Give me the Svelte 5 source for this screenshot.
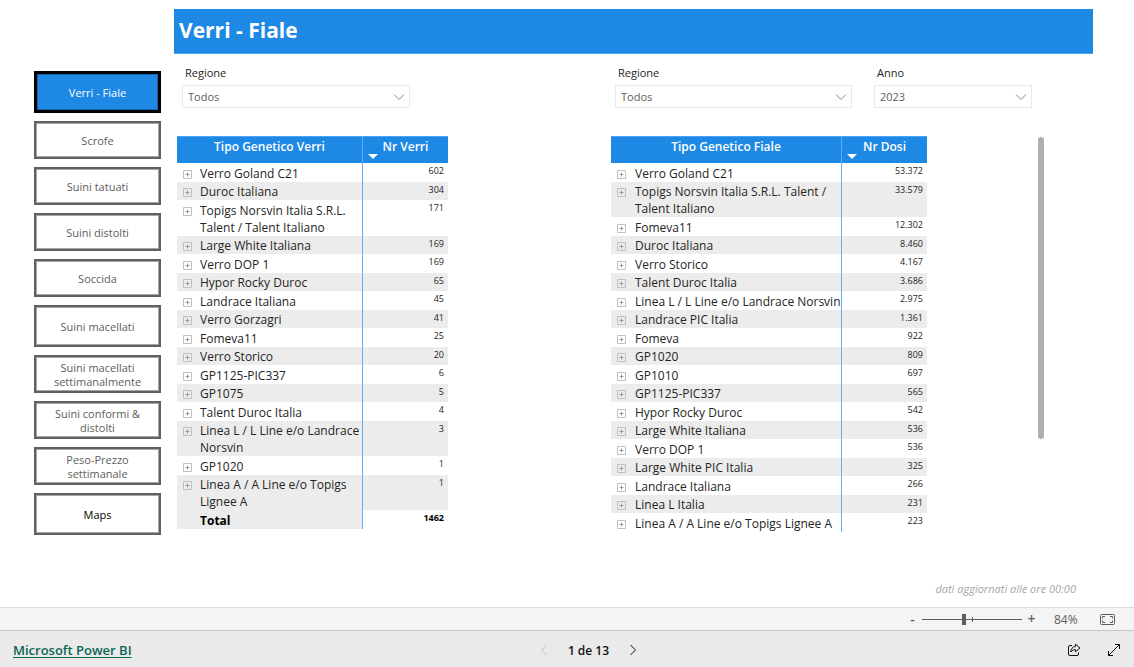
<script lang="ts">
  let page = $state('Verri - Fiale');
  let zoom = $state(42);

  const pages = [
    { name: 'Verri - Fiale', tall: true },
    { name: 'Scrofe' },
    { name: 'Suini tatuati' },
    { name: 'Suini distolti' },
    { name: 'Soccida' },
    { name: 'Suini macellati', tall: true },
    { name: 'Suini macellati settimanalmente' },
    { name: 'Suini conformi & distolti' },
    { name: 'Peso-Prezzo settimanale' },
    { name: 'Maps', tall: true, dark: true },
  ];

  const verri = [
    ['Verro Goland C21', '602'],
    ['Duroc Italiana', '304'],
    ['Topigs Norsvin Italia S.R.L. Talent / Talent Italiano', '171'],
    ['Large White Italiana', '169'],
    ['Verro DOP 1', '169'],
    ['Hypor Rocky Duroc', '65'],
    ['Landrace Italiana', '45'],
    ['Verro Gorzagri', '41'],
    ['Fomeva11', '25'],
    ['Verro Storico', '20'],
    ['GP1125-PIC337', '6'],
    ['GP1075', '5'],
    ['Talent Duroc Italia', '4'],
    ['Linea L / L Line e/o Landrace Norsvin', '3'],
    ['GP1020', '1'],
    ['Linea A / A Line e/o Topigs Lignee A', '1'],
  ];

  const fiale = [
    ['Verro Goland C21', '53.372'],
    ['Topigs Norsvin Italia S.R.L. Talent / Talent Italiano', '33.579'],
    ['Fomeva11', '12.302'],
    ['Duroc Italiana', '8.460'],
    ['Verro Storico', '4.167'],
    ['Talent Duroc Italia', '3.686'],
    ['Linea L / L Line e/o Landrace Norsvin', '2.975'],
    ['Landrace PIC Italia', '1.361'],
    ['Fomeva', '922'],
    ['GP1020', '809'],
    ['GP1010', '697'],
    ['GP1125-PIC337', '565'],
    ['Hypor Rocky Duroc', '542'],
    ['Large White Italiana', '536'],
    ['Verro DOP 1', '536'],
    ['Large White PIC Italia', '325'],
    ['Landrace Italiana', '266'],
    ['Linea L Italia', '231'],
    ['Linea A / A Line e/o Topigs Lignee A', '223'],
  ];
</script>

{#snippet slicer(id, label, value, cls)}
  <div class="slicer {cls}">
    <label for={id}>{label}</label>
    <div class="select">
      <select {id}><option>{value}</option></select>
      <svg width="12" height="8" viewBox="0 0 12 8"><path d="M1 1.5 6 6.5 11 1.5" /></svg>
    </div>
  </div>
{/snippet}

{#snippet matrix(title, measure, rows, cls, total)}
  <table class={cls}>
    <thead>
      <tr>
        <th class="name">{title}</th>
        <th class="num">{measure}<span class="sort"></span></th>
      </tr>
    </thead>
    <tbody>
      {#each rows as [name, n]}
        <tr>
          <td class="name">
            <div class="cell">
              <button class="expand" aria-label="Expand">
                <svg width="9" height="9" viewBox="0 0 9 9"><path d="M.5 .5h8v8h-8z" /><path class="plus" d="M2.5 4.5h4M4.5 2.5v4" /></svg>
              </button>
              <span>{name}</span>
            </div>
          </td>
          <td class="num">{n}</td>
        </tr>
      {/each}
    </tbody>
    {#if total}
      <tfoot>
        <tr><td class="name"><div class="cell"><span>Total</span></div></td><td class="num">{total}</td></tr>
      </tfoot>
    {/if}
  </table>
{/snippet}

<div class="app">
  <div class="report">
    <nav>
      {#each pages as p}
        <button class:tall={p.tall} class:dark={p.dark} class:on={page === p.name} onclick={() => (page = p.name)}>{p.name}</button>
      {/each}
    </nav>

    <main>
      <h1>Verri - Fiale</h1>
      <div class="columns">
        <section>
          <div class="slicers">
            {@render slicer('reg-verri', 'Regione', 'Todos', 'first')}
          </div>
          {@render matrix('Tipo Genetico Verri', 'Nr Verri', verri, 'verri', '1462')}
        </section>
        <section>
          <div class="slicers right">
            {@render slicer('reg-fiale', 'Regione', 'Todos', 'wide')}
            {@render slicer('anno', 'Anno', '2023', 'year')}
          </div>
          <div class="scroll">
            {@render matrix('Tipo Genetico Fiale', 'Nr Dosi', fiale, 'fiale', '')}
            <div class="thumb"></div>
          </div>
        </section>
      </div>
      <p class="note">dati aggiornati alle ore 00:00</p>
    </main>
  </div>

  <div class="status">
    <div class="zoom">
      <button aria-label="Zoom out">-</button>
      <input type="range" aria-label="Zoom" min="0" max="100" bind:value={zoom} />
      <button aria-label="Zoom in">+</button>
    </div>
    <span class="pct">84%</span>
    <button class="fit" aria-label="Fit to page">
      <svg width="15" height="11" viewBox="0 0 15 11"><rect x=".5" y=".5" width="14" height="10" rx="1" /><path d="M5 2.5H2.5V4.5M10 2.5h2.5V4.5M2.5 6.5V8.5H5M12.5 6.5V8.5H10" /></svg>
    </button>
  </div>

  <footer>
    <a href="#powerbi">Microsoft Power BI</a>
    <div class="pager">
      <button class="off" aria-label="Previous page"><svg width="8" height="12" viewBox="0 0 8 12"><path d="M6.5 1 1.5 6l5 5" /></svg></button>
      <span>1 de 13</span>
      <button aria-label="Next page"><svg width="8" height="12" viewBox="0 0 8 12"><path d="M1.5 1l5 5-5 5" /></svg></button>
    </div>
    <div class="tools">
      <button aria-label="Share">
        <svg width="14" height="14" viewBox="0 0 14 14"><path d="M5 2.5H3A1.500 1.500 0 0 0 1.500 4v7A1.500 1.500 0 0 0 3 12.500h7A1.500 1.500 0 0 0 11.500 11V9.500" /><path d="M8.500 1.200 13 5 8.500 8.800V6.700C6.500 6.600 5 7.300 3.800 9 4 5.800 5.500 3.700 8.500 3.400z" /></svg>
      </button>
      <button aria-label="Full screen">
        <svg width="14" height="14" viewBox="0 0 14 14"><path d="M1.500 12.500l11-11M8 1.500h4.500V6M1.500 8v4.500H6" /></svg>
      </button>
    </div>
  </footer>
</div>

<style>
  :global(body) { background: #fff; }
  .app {
    min-height: 100vh; display: flex; flex-direction: column;
    font-family: 'Segoe UI', 'Open Sans', 'Noto Sans', sans-serif; color: #252423;
  }
  button { font: inherit; color: inherit; background: none; border: none; padding: 0; cursor: pointer; }
  svg { display: block; fill: none; stroke: currentColor; }

  .report { flex: 1; display: flex; gap: 13px; padding: 9px 41px 10px 34px; }
  nav { width: 127px; padding-top: 62px; display: flex; flex-direction: column; gap: 8px; }
  nav button {
    height: 38px; border: 2px solid #606060; box-shadow: inset 0 0 0 1px #a6a6a6; background: #fff; color: #605e5c;
    font-size: 11px; line-height: 14px; padding: 1px 13px 0;
  }
  nav .tall { height: 42px; }
  nav .dark { color: #000; }
  nav .on { background: #1e88e5; border: 3px solid #000; box-shadow: inset 0 0 0 1px #1565ab; color: #fff; }

  main { flex: 1; display: flex; flex-direction: column; }
  h1 {
    margin: 0; height: 44px; line-height: 42px; padding-left: 5px; border-bottom: 1px solid #4ba3f5;
    background: #1e88e5; color: #fff; font-size: 21px; font-weight: 700;
  }
  .columns { display: grid; grid-template-columns: 437fr 482fr; }
  .slicers { display: flex; gap: 22px; padding: 10px 0 0 8px; height: 72px; }
  .slicers.right { padding-left: 4px; }
  .slicer { display: flex; flex-direction: column; gap: 4px; }
  .first { width: 228px; }
  .wide { width: 237px; }
  .year { width: 158px; }
  label { font-size: 11px; line-height: 17px; padding-left: 3px; font-weight: 500; }
  .select { display: grid; align-items: center; }
  select, .select svg { grid-area: 1 / 1; }
  select {
    appearance: none; width: 100%; height: 23px; border: 1px solid #eaeaea; border-radius: 0;
    background: #fff; color: #605e5c; font: inherit; font-size: 11px; padding: 0 5px;
  }
  .select svg { justify-self: end; margin-right: 5px; color: #8a8886; pointer-events: none; }

  table { border-collapse: separate; border-spacing: 0; table-layout: fixed; font-size: 12px; line-height: 17px; }
  .verri { width: 271px; margin-left: 3px; }
  .fiale { width: 316px; }
  th {
    height: 27px; padding: 1px 0 0; background: #1e88e5; color: #fff; font-size: 12px; font-weight: 600; line-height: 17px;
    vertical-align: top; border-top: 1px solid #4ba3f5; box-sizing: border-box;
  }
  th.num { width: 85px; position: relative; }
  .sort {
    position: absolute; left: 5px; bottom: 4px;
    border: 5px solid transparent; border-top-color: #fff; border-bottom: none;
  }
  td { padding: 2px 0 0; vertical-align: top; }
  tbody tr:nth-child(even) td { background: #ececec; padding-top: 1px; }
  .name { border-right: 1px solid #5caeff; }
  td.num { text-align: right; padding: 1px 4px 0 0; font-size: 9px; line-height: 14px; }
  .cell { display: flex; gap: 8px; padding-left: 6px; }
  .fiale .cell { gap: 9px; }
  .expand { height: 9px; margin-top: 5px; color: #c0c0c0; }
  .plus { stroke: #999; }
  tfoot td { font-weight: 700; color: #000; }
  tfoot .name { background: #ececec; }
  tfoot .cell { padding-left: 23px; }

  .scroll { display: flex; justify-content: space-between; padding-right: 49px; }
  .thumb { width: 6px; height: 302px; margin-top: 1px; border-radius: 3px; background: #b0aead; }
  .note { margin: auto 17px 0 0; text-align: right; font-size: 11px; line-height: 16px; font-style: italic; color: #a6a6a6; }

  .status {
    height: 22px; border-top: 1px solid #dcdcdc; background: #f4f4f4; color: #605e5c;
    display: flex; align-items: center; justify-content: flex-end; padding-right: 19px;
  }
  .zoom { display: flex; align-items: center; gap: 5px; font-size: 14px; font-weight: 600; line-height: 20px; }
  .zoom button { width: 9px; text-align: center; }
  input {
    appearance: none; width: 100px; height: 12px; margin: 0;
    background:
      linear-gradient(#605e5c, #605e5c) 50% 50% / 1px 5px no-repeat,
      linear-gradient(#605e5c, #605e5c) 0 50% / 100% 1px no-repeat;
  }
  input::-webkit-slider-thumb { appearance: none; width: 4px; height: 11px; background: #605e5c; }
  .pct { width: 24px; margin: 0 22px 0 18px; font-size: 12px; }

  footer {
    height: 36px; border-top: 1px solid #c8c8c8; background: #eaeaea;
    display: grid; grid-template-columns: 1fr auto 1fr; align-items: center; padding: 2px 13px 0; box-sizing: border-box; min-height: 37px; color: #111;
  }
  a { color: #0b6556; font-size: 13px; font-weight: 600; line-height: 18px; text-underline-offset: 2px; }
  .pager { display: flex; align-items: center; gap: 20px; padding-left: 43px; font-size: 12px; font-weight: 600; }
  .pager .off { color: #bbb; }
  .tools { display: flex; justify-content: flex-end; gap: 26px; }
</style>
